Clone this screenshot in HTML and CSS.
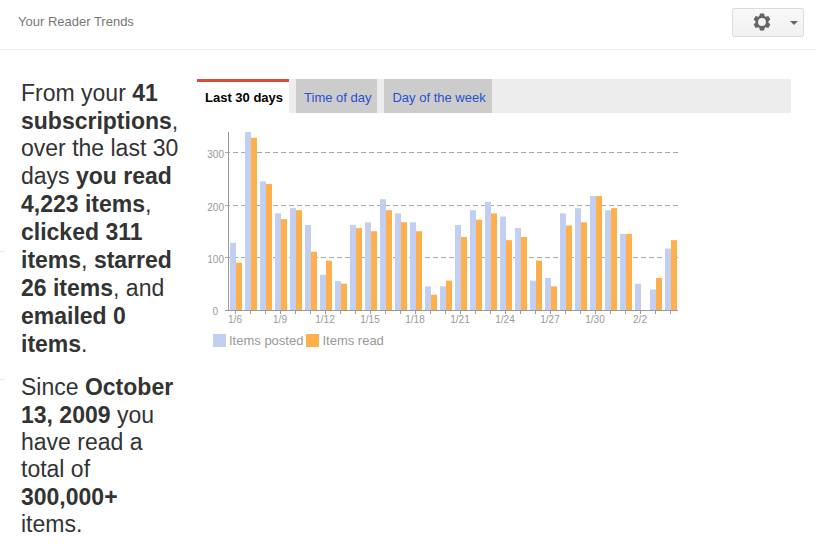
FILE: index.html
```html
<!DOCTYPE html>
<html lang="en">
  <head>
    <meta charset="UTF-8" />
    <meta name="viewport" content="width=device-width, initial-scale=1.0" />
    <title>Your Reader Trends</title>
    <link rel="stylesheet" href="styles.css">
  </head>
  <body>
    <header class="header">
      <h1>Your Reader Trends</h1>
      <button class="settings" type="button" aria-label="Settings">
        <svg class="gear" width="18" height="18" viewBox="-9 -9 18 18">
          <g fill="#666">
            <path id="tooth" d="M-3 -5 L-2 -8.5 H2 L3 -5 V5 L2 8.5 H-2 L-3 5 Z" />
            <use href="#tooth" transform="rotate(60)" />
            <use href="#tooth" transform="rotate(120)" />
            <circle r="6.4" />
          </g>
          <circle r="3.9" fill="#f5f5f5" />
        </svg>
        <span class="caret"></span>
      </button>
    </header>

    <div class="page">
      <div class="rail">
        <div class="rail-top"></div>
        <div class="rail-mid"></div>
      </div>

      <section class="summary">
        <p>From your <b>41 subscriptions</b>, over the last 30 days <b>you read 4,223 items</b>, <b>clicked 311 items</b>, <b>starred 26 items</b>, and <b>emailed 0 items</b>.</p>
        <p>Since <b>October 13, 2009</b> you have read a total of <b>300,000+</b> items.</p>
      </section>

      <main class="trends">
        <nav class="tabs">
          <a class="tab active" href="#last30">Last 30 days</a>
          <a class="tab" href="#time">Time of day</a>
          <a class="tab" href="#week">Day of the week</a>
        </nav>
        <svg class="chart" id="chart" width="490" height="200" viewBox="0 0 490 200" role="img" aria-label="Items posted and items read"></svg>
        <div class="legend">
          <span class="swatch posted"></span><span>Items posted</span>
          <span class="swatch read"></span><span>Items read</span>
        </div>
      </main>
    </div>

    <script src="chart.js"></script>
  </body>
</html>
```
FILE: styles.css
```css
body {
  margin: 0;
  background: #fff;
  color: #333;
  font-family: "Liberation Sans", Arial, sans-serif;
  font-size: 13px;
}
.header {
  display: flex;
  justify-content: space-between;
  align-items: flex-start;
  padding: 8px 12px 12px 18px;
  border-bottom: 1px solid #ebebeb;
}
.header h1 {
  margin: 0;
  font-size: 13px;
  font-weight: normal;
  line-height: 27px;
  color: #777;
}
.settings {
  display: flex;
  align-items: center;
  justify-content: space-between;
  box-sizing: border-box;
  width: 72px;
  height: 29px;
  padding: 0 5px 0 20px;
  border: 1px solid #dcdcdc;
  border-radius: 2px;
  background: linear-gradient(#f8f8f8, #f1f1f1);
  cursor: pointer;
}
.settings:hover {
  border-color: #c6c6c6;
}
.gear {
  margin-bottom: 2px;
}
.caret {
  border: 4px solid transparent;
  border-top-color: #666;
  border-bottom: 0;
}

.page {
  display: flex;
  align-items: flex-start;
}
.rail {
  width: 5px;
}
.rail-top,
.rail-mid {
  border-bottom: 1px solid #ebebeb;
}
.rail-top {
  height: 201px;
}
.rail-mid {
  height: 127px;
}
.summary {
  box-sizing: border-box;
  width: 192px;
  padding: 29px 14px 0 16px;
  font-size: 23px;
  line-height: 27px;
}
.summary p {
  margin: 0 0 15px;
}
.summary b {
  line-height: 28px;
}

.trends {
  flex: 1;
  padding: 29px 25px 0 0;
}
.tabs {
  display: flex;
  gap: 7px;
  background: #ededed;
}
.tab {
  padding: 4px 6px 0 8px;
  line-height: 30px;
  background: #ccc;
  color: #2a4fd0;
  text-decoration: none;
}
.tab.active {
  padding-top: 1px;
  border-top: 3px solid #dd4b39;
  background: #fff;
  color: #000;
  font-weight: bold;
}

.chart {
  display: block;
  margin-top: 14px;
}
.chart text {
  font-size: 10px;
  fill: #999;
}
.chart .axis {
  stroke: #999;
}
.chart .grid {
  stroke: #aaa;
  stroke-dasharray: 5 3;
}
.chart .posted {
  fill: #c3cff1;
}
.chart .read {
  fill: #ffaf4b;
}
.legend {
  display: flex;
  align-items: center;
  gap: 3px;
  padding-left: 16px;
  margin-top: 6px;
  color: #999;
}
.swatch {
  width: 13px;
  height: 13px;
}
.swatch.posted {
  background: #c3cff1;
}
.swatch.read {
  background: #ffaf4b;
}
```
FILE: chart.js
```js
// [items posted, items read] per day, starting at 1/6
const days = [
  [128, 90], [339, 328], [245, 240], [184, 173], [194, 190],
  [162, 111], [67, 94], [55, 50], [162, 156], [167, 150],
  [211, 190], [184, 167], [167, 150], [45, 29], [45, 56],
  [162, 139], [190, 172], [206, 184], [178, 133], [156, 139],
  [56, 94], [61, 45], [184, 161], [194, 167], [217, 217],
  [190, 194], [145, 145], [50, 0], [39, 61], [117, 133]
];

const chart = document.getElementById("chart");
const left = 31;
const base = 183;
const step = 15;
const scale = 0.525;

function add(tag, attrs, text) {
  const el = document.createElementNS("http://www.w3.org/2000/svg", tag);
  for (const name in attrs) {
    el.setAttribute(name, attrs[name]);
  }
  if (text !== undefined) {
    el.textContent = text;
  }
  chart.appendChild(el);
}

function line(x1, y1, x2, y2, cls) {
  add("line", { x1, y1, x2, y2, class: cls });
}

// horizontal grid
for (let v = 100; v <= 300; v += 100) {
  const y = Math.floor(base - v * scale) + 0.5;
  line(left - 3, y, left + 450, y, "grid");
  add("text", { x: left - 4, y: y + 5.5, "text-anchor": "end" }, v);
}
add("text", { x: left - 10, y: base + 5, "text-anchor": "end" }, 0);

days.forEach(([posted, read], i) => {
  const x = left + 2 + i * step;
  add("rect", { x: x, y: base - posted * scale, width: 6, height: posted * scale, class: "posted" });
  add("rect", { x: x + 6, y: base - read * scale, width: 6, height: read * scale, class: "read" });
  line(x + 5.5, base, x + 5.5, base + 4, "axis");

  if (i % 3 === 0) {
    const label = i < 26 ? "1/" + (i + 6) : "2/" + (i - 25);
    add("text", { x: x + 5, y: base + 13, "text-anchor": "middle" }, label);
  }
});

line(left + 0.5, base - 178, left + 0.5, base, "axis");
line(left - 3, base + 0.5, left + 450, base + 0.5, "axis");
```
